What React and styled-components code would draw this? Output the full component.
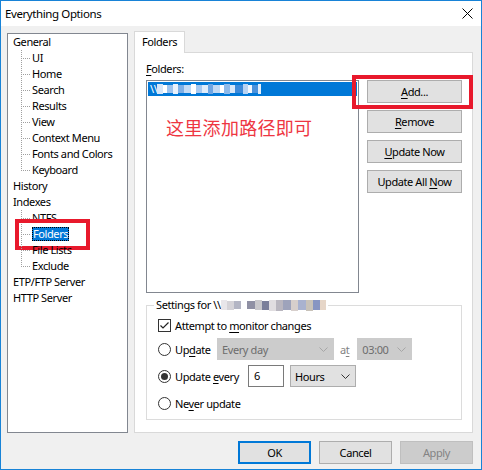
import React from "react";
import styled, { createGlobalStyle } from "styled-components";

const GlobalStyle = createGlobalStyle`
  html, body { margin: 0; padding: 0; background: #fff; }
  body {
    font-family: "Noto Sans", "Noto Sans CJK SC", sans-serif;
    font-size: 11px;
    letter-spacing: -0.4px;
    color: #000;
  }
  * { box-sizing: border-box; }
`;

const Window = styled.div`
  width: 482px;
  height: 470px;
  border: 1px solid #1883d7;
  display: flex;
  flex-direction: column;
  background: #f0f0f0;
  overflow: hidden;
`;

const TitleBar = styled.div`
  height: 25px;
  flex: none;
  background: #fff;
  display: flex;
  align-items: center;
  justify-content: space-between;
  padding: 0 8px 0 4px;
`;

const Title = styled.span`
  font-size: 11.5px;
  line-height: 16px;
`;

const Body = styled.div`
  flex: 1;
  display: flex;
  flex-direction: column;
  padding: 5px 8px 6px 6px;
`;

const Main = styled.div`
  display: flex;
  gap: 6px;
  height: 402px;
`;

const Tree = styled.div`
  width: 122px;
  height: 400px;
  margin-top: 2px;
  background: #fff;
  border: 1px solid #828790;
`;

const Item = styled.div`
  position: relative;
  height: 16px;
  line-height: 16px;
  display: flex;
  align-items: center;
  padding-left: ${(p) => (p.$child ? "13px" : "5px")};
  white-space: nowrap;
`;

const dot = "#a0a0a0";
const Connector = styled.span`
  flex: none;
  width: 11px;
  height: 16px;
  background:
    repeating-linear-gradient(to right, ${dot} 0 1px, transparent 1px 2px) left 8px / 10px 1px no-repeat,
    repeating-linear-gradient(to bottom, ${dot} 0 1px, transparent 1px 2px) left top / 1px ${(p) => (p.$last ? "9px" : "16px")} no-repeat;
`;

const Selected = styled.span`
  background: #0078d7;
  color: #fff;
  line-height: 14px;
  padding: 0 1px;
  outline: 1px dotted #000;
  outline-offset: -1px;
`;

const Annot = styled.span`
  position: absolute;
  border: 4px solid #e8192c;
  pointer-events: none;
`;

const TreeAnnot = styled(Annot)`
  left: 7px;
  top: -7px;
  width: 75px;
  height: 31px;
`;

const TabArea = styled.div`
  flex: 1;
  display: flex;
  flex-direction: column;
`;

const TabStrip = styled.div`
  height: 21px;
  display: flex;
`;

const Tab = styled.div`
  width: 51px;
  height: 22px;
  background: #fff;
  border: 1px solid #d9d9d9;
  border-bottom: none;
  padding-left: 7px;
  line-height: 20px;
  position: relative;
  z-index: 1;
`;

const Panel = styled.div`
  height: 381px;
  background: #fff;
  border: 1px solid #d9d9d9;
  padding: 8px 10px 0 11px;
  display: flex;
  flex-direction: column;
`;

const Label = styled.div`
  line-height: 16px;
  height: 16px;
  margin-bottom: 3px;
`;

const U = styled.span`
  text-decoration: underline;
  text-underline-offset: 2px;
`;

const ListRow = styled.div`
  display: flex;
  gap: 8px;
`;

const ListBox = styled.div`
  width: 213px;
  height: 213px;
  border: 1px solid #828790;
  background: #fff;
  padding: 1px;
`;

const SelRow = styled.div`
  height: 14px;
  background: #0078d7;
  color: #fff;
  display: flex;
  align-items: center;
  padding-left: 2px;
  line-height: 14px;
`;

const Mosaic = styled.span`
  display: inline-block;
  width: ${(p) => p.$w}px;
  height: ${(p) => p.$h || 9}px;
  background: ${(p) => p.$c};
  flex: none;
`;

const Note = styled.div`
  margin-top: 19px;
  padding-left: 18px;
  color: #ee3642;
  font-family: "Noto Sans CJK SC", sans-serif;
  font-size: 18px;
  letter-spacing: 0.3px;
  line-height: 24px;
`;

const ButtonCol = styled.div`
  display: flex;
  flex-direction: column;
  gap: 7px;
`;

const Button = styled.div`
  width: ${(p) => p.$w || 95}px;
  height: 23px;
  background: ${(p) => (p.$disabled ? "#cccccc" : "#e1e1e1")};
  border: ${(p) => (p.$default ? "2px solid #0078d7" : p.$disabled ? "1px solid #bfbfbf" : "1px solid #adadad")};
  color: ${(p) => (p.$disabled ? "#838383" : "#000")};
  text-align: center;
  line-height: ${(p) => (p.$default ? "20px" : "22px")};
  white-space: nowrap;
`;

const AddWrap = styled.div`
  position: relative;
`;

const AddAnnot = styled(Annot)`
  left: -15px;
  top: -5px;
  right: -11px;
  bottom: -6px;
`;

const Group = styled.fieldset`
  margin: 5px 0 0 0;
  width: 316px;
  border: 1px solid #dcdcdc;
  padding: 5px 0 5px 11px;
  display: flex;
  flex-direction: column;
  gap: 5px;
`;

const Legend = styled.legend`
  padding: 0 2px;
  margin-left: -4px;
  line-height: 14px;
  display: flex;
  align-items: center;
`;

const OptRow = styled.div`
  height: ${(p) => p.$h || 22}px;
  display: flex;
  align-items: center;
`;

const Check = styled.span`
  width: 13px;
  height: 13px;
  border: 1px solid #333;
  background: #fff;
  margin-right: 4px;
  display: flex;
  align-items: center;
  justify-content: center;
  flex: none;
`;

const Radio = styled.span`
  width: 13px;
  height: 13px;
  border: 1px solid #333;
  border-radius: 50%;
  background: #fff;
  margin-right: 4px;
  display: flex;
  align-items: center;
  justify-content: center;
  flex: none;
  &::after {
    content: "";
    width: 7px;
    height: 7px;
    border-radius: 50%;
    background: ${(p) => (p.$on ? "#333" : "transparent")};
  }
`;

const OptLabel = styled.span`
  display: inline-block;
  white-space: nowrap;
  padding-top: 1px;
`;

const RadioWrap = styled.span`
  display: flex;
  align-items: center;
  width: ${(p) => p.$w}px;
  flex: none;
`;

const Combo = styled.div`
  width: ${(p) => p.$w}px;
  height: 22px;
  flex: none;
  background: ${(p) => (p.$disabled ? "#cccccc" : "#e1e1e1")};
  border: 1px solid ${(p) => (p.$disabled ? "#cccccc" : "#adadad")};
  color: ${(p) => (p.$disabled ? "#6d6d6d" : "#000")};
  display: flex;
  align-items: center;
  justify-content: space-between;
  padding: 1px 5px 0 4px;
  white-space: nowrap;
`;

const AtLabel = styled.span`
  margin: 0 8px 0 6px;
  padding-top: 1px;
  color: #838383;
`;

const NumInput = styled.div`
  width: 36px;
  height: 22px;
  flex: none;
  background: #fff;
  border: 1px solid #7a7a7a;
  padding-left: 5px;
  line-height: 19px;
  margin-right: 6px;
`;

const Footer = styled.div`
  margin-top: 8px;
  display: flex;
  justify-content: flex-end;
  gap: 8px;
`;

const Chevron = ({ color }) => (
  <svg width="9" height="5" viewBox="0 0 9 5">
    <path d="M0.5 0.5 L4.5 4.5 L8.5 0.5" fill="none" stroke={color} strokeWidth="1" />
  </svg>
);

const CloseIcon = () => (
  <svg width="11" height="11" viewBox="0 0 11 11">
    <path d="M0.5 0.5 L10.5 10.5 M10.5 0.5 L0.5 10.5" stroke="#000" strokeWidth="1" />
  </svg>
);

const CheckMark = () => (
  <svg width="11" height="11" viewBox="0 0 11 11">
    <path d="M1.5 5.5 L4 8 L9.5 2.5" fill="none" stroke="#222" strokeWidth="1.2" />
  </svg>
);

const generalChildren = ["UI", "Home", "Search", "Results", "View", "Context Menu", "Fonts and Colors", "Keyboard"];
const indexChildren = ["NTFS", "Folders", "File Lists", "Exclude"];

const selMosaic = [
  ["#d6e6f8", 6], ["#ffffff", 4], ["#9dc3ee", 6], ["#e9f1fb", 5], ["#7fb0e6", 6], ["#c4dbf5", 7],
  ["#ffffff", 5], ["#a8c9f0", 6], ["#e0ecfa", 6], ["#6da5e3", 5], ["#c0d8f3", 7], ["#ffffff", 4],
  ["#8ebaea", 6], ["#d8e7f8", 5], ["#3e8ad9", 8], ["#b8d3f2", 5], ["#f0f6fd", 4], ["#4b92dc", 6], ["#e3eefa", 3],
];

const legendMosaic = [
  ["#e8e6ea", 6, 10], ["#d5d3d8", 7, 9], ["#b3b5c4", 7, 8], ["#ffffff", 6, 8], ["#8f90a4", 8, 8], ["#c9c8cc", 7, 10],
  ["#7b7f9a", 7, 9], ["#e0dde0", 7, 11], ["#b9b6bf", 7, 11], ["#9ea3bb", 8, 10], ["#d7cfcc", 7, 11], ["#a9b2cf", 8, 10],
  ["#c8c2b9", 7, 11], ["#8795c2", 7, 10], ["#e6d6c8", 6, 10],
];

export default function App() {
  return (
    <>
      <GlobalStyle />
      <Window>
        <TitleBar>
          <Title>Everything Options</Title>
          <CloseIcon />
        </TitleBar>
        <Body>
          <Main>
            <Tree>
              <Item>General</Item>
              {generalChildren.map((t, i) => (
                <Item $child key={t}>
                  <Connector $last={i === generalChildren.length - 1} />
                  {t}
                </Item>
              ))}
              <Item>History</Item>
              <Item>Indexes</Item>
              {indexChildren.map((t, i) => (
                <Item $child key={t}>
                  <Connector $last={i === indexChildren.length - 1} />
                  {t === "Folders" ? (
                    <>
                      <Selected>{t}</Selected>
                      <TreeAnnot />
                    </>
                  ) : (
                    t
                  )}
                </Item>
              ))}
              <Item>ETP/FTP Server</Item>
              <Item>HTTP Server</Item>
            </Tree>
            <TabArea>
              <TabStrip>
                <Tab>Folders</Tab>
              </TabStrip>
              <Panel>
                <Label>
                  <U>F</U>olders:
                </Label>
                <ListRow>
                  <ListBox>
                    <SelRow>
                      <span>\\</span>
                      {selMosaic.map(([c, w], i) => (
                        <Mosaic key={i} $c={c} $w={w} $h={i % 3 === 0 ? 10 : 8} />
                      ))}
                    </SelRow>
                    <Note>这里添加路径即可</Note>
                  </ListBox>
                  <ButtonCol>
                    <AddWrap>
                      <Button>
                        <U>A</U>dd...
                      </Button>
                      <AddAnnot />
                    </AddWrap>
                    <Button>
                      <U>R</U>emove
                    </Button>
                    <Button>
                      <U>U</U>pdate Now
                    </Button>
                    <Button>
                      Update All <U>N</U>ow
                    </Button>
                  </ButtonCol>
                </ListRow>
                <Group>
                  <Legend>
                    <span>Settings for \\</span>
                    {legendMosaic.map(([c, w, h], i) => (
                      <Mosaic key={i} $c={c} $w={w} $h={h} />
                    ))}
                  </Legend>
                  <OptRow $h={16}>
                    <Check>
                      <CheckMark />
                    </Check>
                    <OptLabel>
                      Attempt to <U>m</U>onitor changes
                    </OptLabel>
                  </OptRow>
                  <OptRow>
                    <RadioWrap $w={59}>
                      <Radio />
                      <OptLabel>
                        Up<U>d</U>ate
                      </OptLabel>
                    </RadioWrap>
                    <Combo $w={117} $disabled>
                      <span>Every day</span>
                      <Chevron color="#a6a6a6" />
                    </Combo>
                    <AtLabel>
                      a<U>t</U>
                    </AtLabel>
                    <Combo $w={55} $disabled>
                      <span>03:00</span>
                      <Chevron color="#a6a6a6" />
                    </Combo>
                  </OptRow>
                  <OptRow>
                    <RadioWrap $w={90}>
                      <Radio $on />
                      <OptLabel>
                        Update <U>e</U>very
                      </OptLabel>
                    </RadioWrap>
                    <NumInput>6</NumInput>
                    <Combo $w={66}>
                      <span>Hours</span>
                      <Chevron color="#333" />
                    </Combo>
                  </OptRow>
                  <OptRow>
                    <RadioWrap $w={120}>
                      <Radio />
                      <OptLabel>
                        Ne<U>v</U>er update
                      </OptLabel>
                    </RadioWrap>
                  </OptRow>
                </Group>
              </Panel>
            </TabArea>
          </Main>
          <Footer>
            <Button $w={73} $default>
              OK
            </Button>
            <Button $w={73}>Cancel</Button>
            <Button $w={73} $disabled>
              Apply
            </Button>
          </Footer>
        </Body>
      </Window>
    </>
  );
}
